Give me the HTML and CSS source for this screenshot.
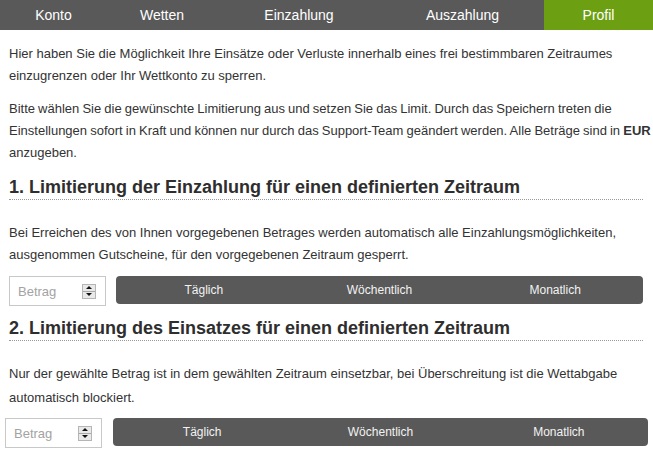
FILE: index.html
```html
<!DOCTYPE html>
<html lang="de">
<head>
<meta charset="utf-8">
<title>Profil</title>
<link rel="stylesheet" href="styles.css">
</head>
<body>
<nav class="nav">
  <a class="tab">Konto</a>
  <a class="tab">Wetten</a>
  <a class="tab">Einzahlung</a>
  <a class="tab">Auszahlung</a>
  <a class="tab tab-active">Profil</a>
</nav>
<main class="content">
  <p class="text text-top">Hier haben Sie die Möglichkeit Ihre Einsätze oder Verluste innerhalb eines frei bestimmbaren Zeitraumes einzugrenzen oder Ihr Wettkonto zu sperren.</p>
  <p class="text text-intro">Bitte wählen Sie die gewünschte Limitierung aus und setzen Sie das Limit. Durch das Speichern treten die Einstellungen sofort in Kraft und können nur durch das Support-Team geändert werden. Alle Beträge sind in <b>EUR</b> anzugeben.</p>

  <section class="section">
    <h2 class="heading">1. Limitierung der Einzahlung für einen definierten Zeitraum</h2>
    <p class="text text-first">Bei Erreichen des von Ihnen vorgegebenen Betrages werden automatisch alle Einzahlungsmöglichkeiten, ausgenommen Gutscheine, für den vorgegebenen Zeitraum gesperrt.</p>
    <div class="row">
      <div class="amount"><span class="placeholder">Betrag</span><span class="spin"><span class="up"></span><span class="down"></span></span></div>
      <div class="periods"><span>Täglich</span><span>Wöchentlich</span><span>Monatlich</span></div>
    </div>
  </section>

  <section class="section">
    <h2 class="heading">2. Limitierung des Einsatzes für einen definierten Zeitraum</h2>
    <p class="text text-first text-loose">Nur der gewählte Betrag ist in dem gewählten Zeitraum einsetzbar, bei Überschreitung ist die Wettabgabe automatisch blockiert.</p>
    <div class="row row-wide">
      <div class="amount"><span class="placeholder">Betrag</span><span class="spin"><span class="up"></span><span class="down"></span></span></div>
      <div class="periods"><span>Täglich</span><span>Wöchentlich</span><span>Monatlich</span></div>
    </div>
  </section>
</main>
</body>
</html>
```
FILE: styles.css
```css
html, body {
  margin: 0;
  padding: 0;
  background: #fff;
}
body {
  font-family: Arial, "Liberation Sans", sans-serif;
  color: #333;
  width: 653px;
  overflow: hidden;
}
.nav {
  display: grid;
  grid-template-columns: 107px 110px 164px 163px 109px;
  height: 30px;
  background: #595959;
}
.tab {
  display: flex;
  align-items: center;
  justify-content: center;
  color: #fff;
  font-size: 14px;
  padding-bottom: 1px;
}
.tab-active {
  background: #6c9f12;
}
.content {
  padding: 0 10px 0 9px;
}
.text {
  font-size: 13px;
  line-height: 22px;
  margin: 11px 0;
}
.text-top {
  margin-top: 13px;
}
.text-intro {
  margin-right: -10px;
  word-spacing: -0.5px;
}
.text b {
  font-weight: bold;
}
.text-first {
  margin-top: 22px;
  margin-bottom: 10px;
}
.text-loose {
  line-height: 24px;
  margin-top: 21px;
  margin-bottom: 8px;
}
.section {
  margin-top: 12px;
}
.section + .section {
  margin-top: 11px;
}
.heading {
  font-size: 18px;
  font-weight: bold;
  line-height: 23px;
  margin: 0;
  border-bottom: 1px dotted #9a9a9a;
  color: #2e2e2e;
}
.row {
  display: flex;
  align-items: flex-start;
  gap: 10px;
  height: 30px;
}
.row-wide {
  margin: 0 -5px 0 -4px;
  gap: 11px;
}
.amount {
  box-sizing: border-box;
  width: 97px;
  height: 30px;
  border: 1px solid #c8c8c8;
  display: flex;
  align-items: center;
  justify-content: space-between;
  padding: 0 9px 0 8px;
  flex: none;
}
.placeholder {
  font-size: 13px;
  color: #a3a3a3;
}
.spin {
  box-sizing: border-box;
  width: 14px;
  height: 15px;
  border: 1px solid #b5b5b5;
  background: #e9e9e9;
  display: flex;
  flex-direction: column;
}
.up, .down {
  flex: 1;
  display: flex;
  align-items: center;
  justify-content: center;
}
.up {
  border-bottom: 1px solid #a8a8a8;
}
.up::before {
  content: "";
  border-left: 3px solid transparent;
  border-right: 3px solid transparent;
  border-bottom: 3px solid #111;
}
.down::before {
  content: "";
  border-left: 3px solid transparent;
  border-right: 3px solid transparent;
  border-top: 3px solid #111;
}
.periods {
  flex: 1;
  height: 28px;
  background: #595959;
  border-radius: 4px;
  display: grid;
  grid-template-columns: 1fr 1fr 1fr;
  align-items: center;
  color: #f2f2f2;
  font-size: 12px;
  text-align: center;
}
```
